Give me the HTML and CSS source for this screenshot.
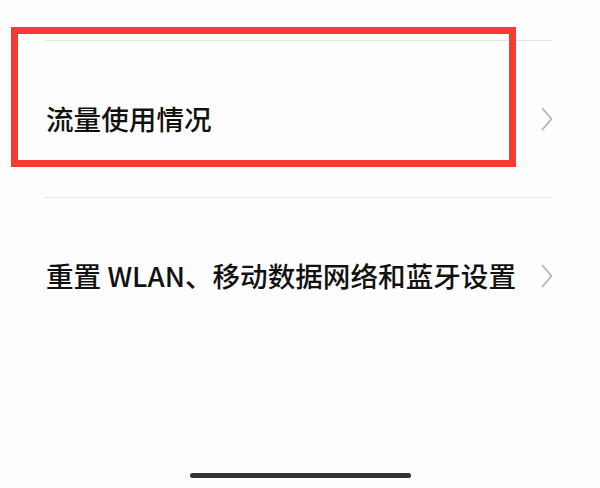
FILE: index.html
```html
<!DOCTYPE html>
<html lang="zh-CN">
<head>
<meta charset="utf-8">
<title>设置</title>
<link rel="stylesheet" href="styles.css">
</head>
<body>
<div class="screen">
  <ul class="menu">
    <li class="menu-item">
      <span class="label">流量使用情况</span>
      <svg class="chevron" viewBox="0 0 12 24" width="12" height="24"><path d="M1.5 1.5 L10.5 12 L1.5 22.5" fill="none" stroke="#b5b5b5" stroke-width="1.9" stroke-linecap="round" stroke-linejoin="round"/></svg>
    </li>
    <li class="menu-item">
      <span class="label">重置 WLAN、移动数据网络和蓝牙设置</span>
      <svg class="chevron" viewBox="0 0 12 24" width="12" height="24"><path d="M1.5 1.5 L10.5 12 L1.5 22.5" fill="none" stroke="#b5b5b5" stroke-width="1.9" stroke-linecap="round" stroke-linejoin="round"/></svg>
    </li>
  </ul>
  <div class="home-bar"></div>
  <div class="highlight"></div>
</div>
</body>
</html>
```
FILE: styles.css
```css
html, body {
  margin: 0;
  padding: 0;
  background: #fefefe;
}

.screen {
  position: relative;
  width: 600px;
  height: 488px;
  display: flex;
  flex-direction: column;
  font-family: "Noto Sans CJK SC", "Noto Sans", sans-serif;
  color: #111;
}

.menu {
  list-style: none;
  margin: 40px 47px 0 45px;
  padding: 0;
}

.menu-item {
  height: 157px;
  border-top: 1px solid #e6e6e6;
  display: flex;
  align-items: center;
  justify-content: space-between;
  box-sizing: border-box;
}

.label {
  font-size: 27.6px;
  font-weight: 500;
  line-height: 1;
  padding-left: 1px;
  white-space: nowrap;
}

.chevron {
  flex: none;
  display: block;
}

.home-bar {
  margin: auto auto 10px;
  width: 221px;
  height: 5px;
  border-radius: 3px;
  background: #333;
}

/* red annotation frame around the first entry */
.highlight {
  position: absolute;
  left: 11px;
  top: 27px;
  width: 505px;
  height: 140px;
  box-sizing: border-box;
  border: 7px solid #f53b33;
}
```
